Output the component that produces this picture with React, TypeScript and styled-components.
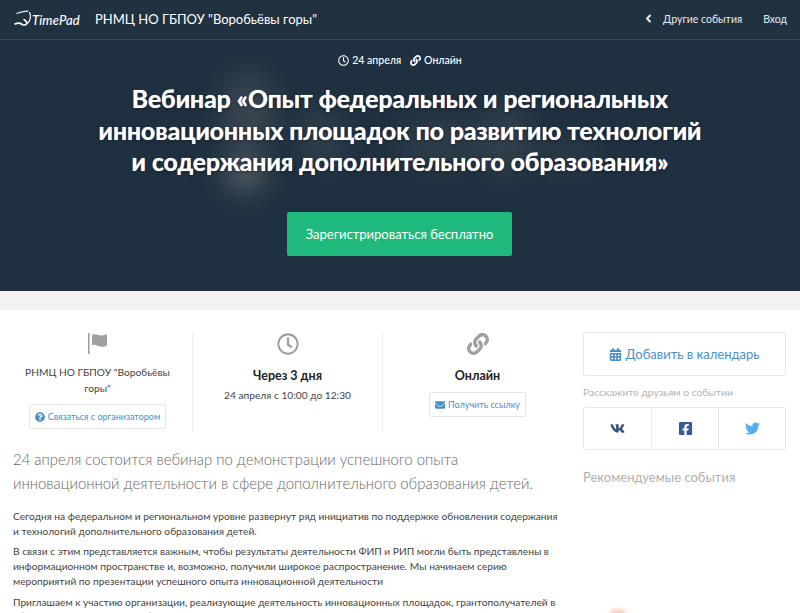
import React from "react";
import styled, { createGlobalStyle } from "styled-components";
import { FaRegClock, FaLink, FaQuestionCircle, FaEnvelope, FaCalendarAlt, FaVk, FaFacebookSquare, FaTwitter, FaAngleLeft } from "react-icons/fa";

const Global = createGlobalStyle`
  html, body { margin: 0; padding: 0; height: 613px; overflow: hidden; background: #fff; }
  body { font-family: Lato, "Noto Sans", sans-serif; color: #333; }
  * { box-sizing: border-box; }
`;
const Hero = styled.section`
  position: relative; height: 291px; background: #1f3140; overflow: hidden; color: #fff;
`;
const Glow = styled.div<{ $l: number; $t: number; $w: number; $h: number; $o: number }>`
  position: absolute; left: ${p => p.$l}px; top: ${p => p.$t}px; width: ${p => p.$w}px; height: ${p => p.$h}px;
  background: rgba(190, 180, 165, ${p => p.$o}); border-radius: 50%; filter: blur(14px);
`;
const TopBar = styled.header`
  position: relative; height: 40px; display: flex; align-items: center; padding: 0 13px 2px 14px;
  border-bottom: 1px solid rgba(255,255,255,.11); background: #20323f;
`;
const Logo = styled.div`display: flex; align-items: center; width: 72px; margin-right: 9px;`;
const LogoText = styled.span`font-size: 13px; font-style: italic; font-weight: 500; letter-spacing: .1px; padding-top: 2px;`;
const OrgName = styled.div`font-size: 13px; flex: 1;`;
const TopLink = styled.a`font-size: 10.5px; color: #e6e9eb; display: flex; align-items: center;`;
const BackIcon = styled(FaAngleLeft)`font-size: 13px; margin-right: 8px;`;
const Login = styled(TopLink)`margin-left: 21px;`;
const HeroBody = styled.div`position: relative; display: flex; flex-direction: column; align-items: center; padding-top: 13px;`;
const Meta = styled.div`display: flex; gap: 9px; font-size: 10.5px; font-weight: 500; height: 14px; align-items: center;`;
const MetaItem = styled.span`display: flex; align-items: center; gap: 3px; & svg { font-size: 11px; }`;
const Title = styled.h1`
  margin: 16px 0 0; width: 612px; text-align: center; font-size: 24.7px; line-height: 31.7px; font-weight: 700;
  text-shadow: 0 0 .7px #fff, 0 1px 3px rgba(0,0,0,.5);
`;
const Register = styled.button`
  margin: 34px 1px 0 0; width: 225px; height: 44px; border: 0; border-radius: 2px; background: #1fb97b; color: #fff;
  font: 400 13px Lato, sans-serif;
`;
const Band = styled.div`height: 19px; background: #f2f2f2;`;
const Page = styled.main`display: flex; height: 303px; overflow: hidden;`;
const Content = styled.div`width: 572px; flex: none;`;
const InfoRow = styled.div`display: grid; grid-template-columns: 192px 190px 190px; padding-top: 22px; height: 122px;`;
const InfoCol = styled.div<{ $first?: boolean }>`
  display: flex; flex-direction: column; align-items: center; text-align: center;
  padding-left: ${p => (p.$first ? 3 : 0)}px;
  & + & { border-left: 1px solid #eee; }
`;
const IconSlot = styled.div`height: 23px; font-size: 22px; color: #a0a0a0; display: flex; align-items: center; margin-bottom: 9px;`;
const OrgLabel = styled.div`font-size: 10.2px; line-height: 16px; width: 160px; color: #444;`;
const Strong = styled.div`margin-top: 3px; font-size: 12.5px; font-weight: 700; line-height: 18px; color: #222; margin-bottom: 2px;`;
const Sub = styled.div`font-size: 10.2px; line-height: 16px; color: #444;`;
const Small = styled.a<{ $tight?: boolean }>`
  margin-top: ${p => (p.$tight ? 5 : 8)}px; display: inline-flex; align-items: center; gap: 3px; height: 25px; padding: 0 5px;
  border: 1px solid #e6e6e6; border-radius: 2px; color: #4a90c8; font-size: 9px; white-space: nowrap;
  & svg { font-size: 10px; }
`;
const Text = styled.div`padding: 15px 8px 0 13px;`;
const Lead = styled.p`margin: 0 0 14px; font-size: 14.9px; line-height: 24px; font-weight: 300; color: #666;`;
const Para = styled.p`margin: 0 0 6px; font-size: 10.2px; line-height: 14.7px; color: #444;`;
const Side = styled.aside`position: relative; margin-left: 11px; width: 203px; padding-top: 22px;`;
const CalBtn = styled.a`
  height: 44px; display: flex; align-items: center; justify-content: center; gap: 3px; border: 1px solid #e8e8e8; border-radius: 2px;
  color: #4a90c8; font-size: 13px;
`;
const Hint = styled.div`margin-top: 8px; font-size: 10.3px; line-height: 16px; color: #b3b3b3;`;
const Share = styled.div`margin-top: 7px; height: 43px; display: grid; grid-template-columns: repeat(3, 1fr); border: 1px solid #e8e8e8; border-radius: 2px;`;
const ShareCell = styled.a<{ $c: string }>`
  display: flex; align-items: center; justify-content: center; font-size: 15px; color: ${p => p.$c};
  & + & { border-left: 1px solid #e8e8e8; }
`;
const Rec = styled.div`margin-top: 19px; font-size: 13px; color: #b0b0b0;`;
const Blob = styled.div`position: absolute; left: 28px; top: 300px; width: 14px; height: 5px; background: #f4c4b0; filter: blur(2px);`;

const TimePadMark = () => (
  <svg width="18" height="17" viewBox="0 0 18 17" fill="none" stroke="#fff" strokeWidth="1.2" strokeLinecap="round">
    <path d="M3 3.5c1-1.4 2-.2 3-1.2s2 .4 3-.6 2 .4 3-.4 1.6 0 2-.3" strokeDasharray="1.4 1" />
    <path d="M15.5 2.5c1.8 3.5 1.2 8.5-2.5 11" />
    <path d="M1 14c3-1.4 6-1 8 1 2 .3 3.2-.4 4-1.5-.6-2.4-1.6-3.4-3-4" strokeWidth="1.6" />
  </svg>
);

const FlagMark = () => (
  <svg width="20" height="21" viewBox="0 0 20 21" fill="#a0a0a0">
    <rect x="0" y="0" width="1.6" height="21" />
    <path d="M4 2c4-2.2 7 1.6 12 0l3-.6v11c-4 2.2-8 1-11-.2-2-.7-3-.4-4 .2z" />
  </svg>
);

export default function App() {
  return (
    <>
      <Global />
      <Hero>
        <Glow $l={222} $t={72} $w={52} $h={80} $o={0.16} />
        <Glow $l={225} $t={155} $w={40} $h={36} $o={0.36} />
        <Glow $l={300} $t={110} $w={45} $h={55} $o={0.12} />
        <Glow $l={395} $t={120} $w={90} $h={45} $o={0.1} />
        <Glow $l={480} $t={108} $w={50} $h={65} $o={0.13} />
        <Glow $l={530} $t={140} $w={70} $h={30} $o={0.08} />
        <TopBar>
          <Logo><TimePadMark /><LogoText>TimePad</LogoText></Logo>
          <OrgName>РНМЦ НО ГБПОУ "Воробьёвы горы"</OrgName>
          <TopLink><BackIcon />Другие события</TopLink>
          <Login>Вход</Login>
        </TopBar>
        <HeroBody>
          <Meta>
            <MetaItem><FaRegClock />24 апреля</MetaItem>
            <MetaItem><FaLink />Онлайн</MetaItem>
          </Meta>
          <Title>Вебинар «Опыт федеральных и региональных инновационных площадок по развитию технологий и содержания дополнительного образования»</Title>
          <Register>Зарегистрироваться бесплатно</Register>
        </HeroBody>
      </Hero>
      <Band />
      <Page>
        <Content>
          <InfoRow>
            <InfoCol $first>
              <IconSlot><FlagMark /></IconSlot>
              <OrgLabel>РНМЦ НО ГБПОУ "Воробьёвы горы"</OrgLabel>
              <Small><FaQuestionCircle />Связаться с организатором</Small>
            </InfoCol>
            <InfoCol>
              <IconSlot><FaRegClock /></IconSlot>
              <Strong>Через 3 дня</Strong>
              <Sub>24 апреля с 10:00 до 12:30</Sub>
            </InfoCol>
            <InfoCol>
              <IconSlot><FaLink /></IconSlot>
              <Strong>Онлайн</Strong>
              <Small $tight><FaEnvelope />Получить ссылку</Small>
            </InfoCol>
          </InfoRow>
          <Text>
            <Lead>24 апреля состоится вебинар по демонстрации успешного опыта инновационной деятельности в сфере дополнительного образования детей.</Lead>
            <Para>Сегодня на федеральном и региональном уровне развернут ряд инициатив по поддержке обновления содержания и технологий дополнительного образования детей.</Para>
            <Para>В связи с этим представляется важным, чтобы результаты деятельности ФИП и РИП могли быть представлены в информационном пространстве и, возможно, получили широкое распространение. Мы начинаем серию мероприятий по презентации успешного опыта инновационной деятельности</Para>
            <Para>Приглашаем к участию организации, реализующие деятельность инновационных площадок, грантополучателей в области дополнительного образования детей.</Para>
          </Text>
        </Content>
        <Side>
          <CalBtn><FaCalendarAlt />Добавить в календарь</CalBtn>
          <Hint>Расскажите друзьям о событии</Hint>
          <Share>
            <ShareCell $c="#35557f"><FaVk /></ShareCell>
            <ShareCell $c="#3b5998"><FaFacebookSquare /></ShareCell>
            <ShareCell $c="#55acee"><FaTwitter /></ShareCell>
          </Share>
          <Rec>Рекомендуемые события</Rec>
          <Blob />
        </Side>
      </Page>
    </>
  );
}
